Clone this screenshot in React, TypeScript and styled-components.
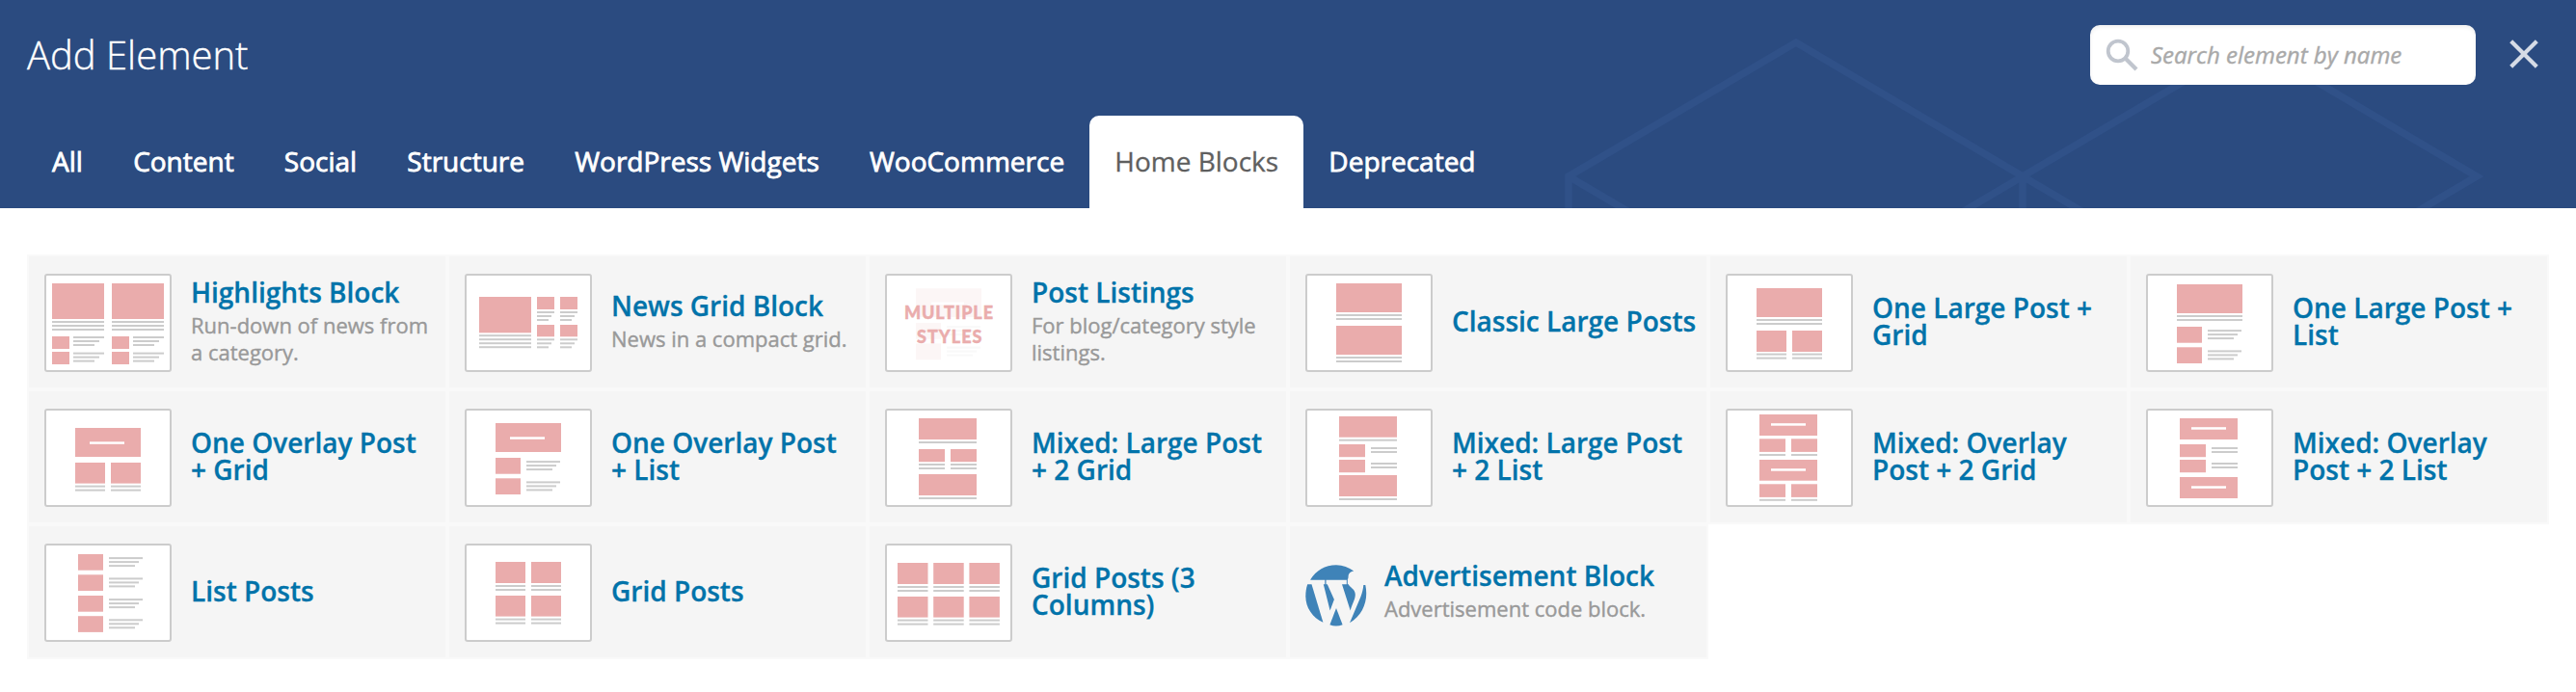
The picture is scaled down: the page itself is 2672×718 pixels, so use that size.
import React from 'react';
import styled, { createGlobalStyle } from 'styled-components';

const GlobalStyle = createGlobalStyle`
  *, *::before, *::after { box-sizing: border-box; }
  body {
    margin: 0;
    background: #fff;
    font-family: 'Open Sans', 'Noto Sans', sans-serif;
  }
`;

const PINK = '#eaacac';
const GREY = '#cccccc';

const Panel = styled.main`
  min-height: 718px;
  background: #fff;
`;

const Header = styled.header`
  position: relative;
  display: flex;
  flex-direction: column;
  justify-content: space-between;
  height: 216px;
  padding: 26px 28px 0;
  background: #2b4b80;
`;

const Pattern = styled.svg`
  position: absolute;
  top: 0;
  right: 0;
  width: 1072px;
  height: 216px;
  fill: none;
  stroke: #305188;
  stroke-width: 7.5px;
`;

const TitleBar = styled.div`
  position: relative;
  display: flex;
  align-items: center;
  height: 62px;
`;

const Title = styled.h1`
  flex: 1;
  margin: 0;
  color: #fff;
  font-size: 40px;
  font-weight: 300;
  line-height: 62px;
  -webkit-text-stroke: 0.4px currentColor;
`;

const SearchBox = styled.label`
  display: flex;
  align-items: center;
  width: 400px;
  height: 62px;
  padding-left: 16px;
  border-radius: 10px;
  background: #fff;
  box-shadow: inset 0 2px 4px rgba(0, 0, 0, 0.07);
`;

const SearchInput = styled.input`
  flex: 1;
  min-width: 0;
  margin-left: 13px;
  padding: 0 0 2px;
  border: 0;
  outline: 0;
  background: transparent;
  font: italic 400 24px 'Open Sans', sans-serif;
  &::placeholder {
    color: #a9a9a9;
    opacity: 1;
    -webkit-text-stroke: 0.4px #a9a9a9;
  }
`;

const CloseButton = styled.button`
  display: flex;
  margin: 0 11px 2px 35px;
  padding: 0;
  border: 0;
  background: none;
`;

const Tabs = styled.nav`
  position: relative;
  display: flex;
`;

const Tab = styled.button<{ $active?: boolean }>`
  height: 96px;
  padding: 0 26.1px 2px;
  border: 0;
  border-radius: 10px 10px 0 0;
  background: ${(p) => (p.$active ? '#fff' : 'transparent')};
  color: ${(p) => (p.$active ? '#5f5f5f' : '#fff')};
  font-family: inherit;
  font-size: 28px;
  font-weight: 400;
  white-space: nowrap;
  -webkit-text-stroke: ${(p) => (p.$active ? '0.3px' : '0.8px')} currentColor;
`;

const Grid = styled.section`
  display: grid;
  grid-template-columns: repeat(6, 436px);
  grid-auto-rows: 140px;
  padding: 48px 28px;
`;

const Card = styled.article`
  display: flex;
  align-items: center;
  padding: 0 10px 0 16px;
  border: 2px solid #f9f9f9;
  background: #f5f5f5;
`;

const Thumb = styled.svg`
  flex: none;
  box-sizing: border-box;
  width: 132px;
  height: 102px;
  margin: 2px 20px 0 0;
  border: 2px solid #ccc;
  border-radius: 3px;
  background: #fff;
`;

const Logo = styled.svg`
  flex: none;
  width: 64px;
  height: 64px;
  margin: 8px 18px 0 0;
  fill: #3f83b8;
`;

const Name = styled.h2`
  margin: 0;
  padding-bottom: 2px;
  color: #0073aa;
  font-size: 28px;
  font-weight: 600;
  line-height: 28px;
  -webkit-text-stroke: 0.3px currentColor;
`;

const Description = styled.p`
  margin: 4px 0 0;
  color: #999;
  font-size: 22px;
  line-height: 28px;
  -webkit-text-stroke: 0.4px currentColor;
`;

const ThumbText = styled.text`
  fill: ${PINK};
  stroke: ${PINK};
  stroke-width: 0.4px;
  font-family: Lato, sans-serif;
  font-size: 18px;
  font-weight: 900;
`;

/* Building pieces of the layout previews, in pixels of the 128x98 drawing area. */
const Box = ({ x, y, w, h }: { x: number; y: number; w: number; h: number }) => (
  <rect x={x} y={y} width={w} height={h} fill={PINK} />
);

const Lines = ({ x, y, w }: { x: number; y: number; w: number[] }) => (
  <>
    {w.map((width, i) => (
      <rect key={i} x={x} y={y + i * 4} width={width} height={2} fill={GREY} />
    ))}
  </>
);

const Overlay = ({ x, y, w, h, line }: { x: number; y: number; w: number; h: number; line: number }) => (
  <>
    <Box x={x} y={y} w={w} h={h} />
    <rect x={45} y={line} width={36} height={2.5} fill="#fff" />
  </>
);

type PostProps = { x: number; y: number; w: number; h: number; gap: number; lines: number[] };

const Post = ({ x, y, w, h, gap, lines }: PostProps) => (
  <>
    <Box x={x} y={y} w={w} h={h} />
    <Lines x={x} y={y + h + gap} w={lines} />
  </>
);

const ListItem = ({ x, y, h = 16.7 }: { x: number; y: number; h?: number }) => (
  <>
    <Box x={x} y={y} w={26} h={h} />
    <Lines x={x + 32} y={y + 3.1} w={[35, 31, 27]} />
  </>
);

const CompactItem = ({ y }: { y: number }) => (
  <>
    <Box x={33} y={y} w={27} h={13.2} />
    <Lines x={66} y={y + 3} w={[27, 27]} />
  </>
);

const previews: Record<string, React.ReactNode> = {
  highlights: [6, 68].map((x) => (
    <g key={x}>
      <Post x={x} y={8} w={54} h={37} gap={2} lines={[54, 54, 54]} />
      <Box x={x} y={63} w={18} h={13} />
      <Lines x={x + 22} y={63} w={[32, 27, 22]} />
      <Box x={x} y={79} w={18} h={13} />
      <Lines x={x + 22} y={79.6} w={[32, 27, 22]} />
    </g>
  )),
  newsGrid: (
    <>
      <Box x={13} y={22} w={54} h={37.3} />
      <Lines x={13} y={61.2} w={[54, 54, 54, 54]} />
      {[73, 97].map((x) => (
        <g key={x}>
          <Post x={x} y={22} w={18} h={13} gap={2} lines={[18, 15, 12]} />
          <Post x={x} y={51} w={18} h={12.3} gap={2} lines={[18, 15, 12]} />
        </g>
      ))}
    </>
  ),
  listings: (
    <>
      <g opacity={0.1}>
        <Box x={30} y={13.3} w={68} h={29.7} />
        <rect x={46} y={27.5} width={34} height={2.5} fill="#fff" />
        <ListItem x={30} y={49} />
        <ListItem x={30} y={70.5} />
      </g>
      <ThumbText x={18} y={44.8} textLength={92} lengthAdjust="spacing">MULTIPLE</ThumbText>
      <ThumbText x={31} y={69.5} textLength={67.5} lengthAdjust="spacing">STYLES</ThumbText>
    </>
  ),
  classic: (
    <>
      <Post x={30} y={8} w={68} h={30} gap={2} lines={[68, 68]} />
      <Post x={30} y={52} w={68} h={30} gap={2} lines={[68, 68]} />
    </>
  ),
  largeGrid: (
    <>
      <Post x={30} y={13} w={68} h={30} gap={2} lines={[68, 68]} />
      <Post x={30} y={57} w={31} h={22} gap={1.6} lines={[31, 31]} />
      <Post x={67} y={57} w={31} h={22} gap={1.6} lines={[31, 31]} />
    </>
  ),
  largeList: (
    <>
      <Post x={30} y={9} w={68} h={30} gap={2} lines={[68, 68]} />
      <ListItem x={30} y={53} />
      <ListItem x={30} y={74.3} />
    </>
  ),
  overlayGrid: (
    <>
      <Overlay x={30} y={18} w={68} h={30} line={32.3} />
      <Post x={30} y={54} w={31} h={21.6} gap={2} lines={[31, 31]} />
      <Post x={67} y={54} w={31} h={21.6} gap={2} lines={[31, 31]} />
    </>
  ),
  overlayList: (
    <>
      <Overlay x={30} y={13} w={68} h={30} line={27.3} />
      <ListItem x={30} y={49} />
      <ListItem x={30} y={70.3} />
    </>
  ),
  mixedLargeGrid: (
    <>
      <Post x={33} y={8} w={60} h={22} gap={2} lines={[60]} />
      <Post x={33} y={40} w={27} h={13.2} gap={1.8} lines={[27, 27]} />
      <Post x={66} y={40} w={27} h={13.2} gap={1.8} lines={[27, 27]} />
      <Post x={33} y={66} w={60} h={22} gap={2} lines={[60]} />
    </>
  ),
  mixedLargeList: (
    <>
      <Post x={33} y={6} w={60} h={21.7} gap={2} lines={[60]} />
      <CompactItem y={35} />
      <CompactItem y={51} />
      <Post x={33} y={67} w={60} h={22} gap={2} lines={[60]} />
    </>
  ),
  mixedOverlayGrid: (
    <>
      <Overlay x={33} y={4} w={60} h={22} line={13.2} />
      <Post x={33} y={29.3} w={27} h={13.6} gap={2.1} lines={[27]} />
      <Post x={66} y={29.3} w={27} h={13.6} gap={2.1} lines={[27]} />
      <Overlay x={33} y={51} w={60} h={21.7} line={60.2} />
      <Post x={33} y={76.3} w={27} h={13.6} gap={1.9} lines={[27]} />
      <Post x={66} y={76.3} w={27} h={13.6} gap={1.9} lines={[27]} />
    </>
  ),
  mixedOverlayList: (
    <>
      <Overlay x={33} y={8} w={60} h={22} line={17.2} />
      <CompactItem y={35} />
      <CompactItem y={51} />
      <Overlay x={33} y={69} w={60} h={22} line={78.3} />
    </>
  ),
  list: [9, 30.3, 52, 73.2].map((y) => <ListItem key={y} x={33} y={y} />),
  grid: [30, 67].map((x) => (
    <g key={x}>
      <Post x={x} y={17} w={31} h={22} gap={2} lines={[31, 31]} />
      <Post x={x} y={52} w={31} h={21.6} gap={2} lines={[31, 31]} />
    </g>
  )),
  gridThree: [11, 48.2, 85.4].map((x) => (
    <g key={x}>
      <Post x={x} y={18} w={31.5} h={22} gap={2} lines={[31.5, 31.5]} />
      <Post x={x} y={53} w={31.5} h={21.6} gap={2} lines={[31.5, 31.5]} />
    </g>
  )),
};

const WordPressLogo = () => (
  <Logo viewBox="0 0 64 64">
    <path d="M5.3 15.3C11 6 20.500 0.300 32 0.300C39 0.300 45 2.600 50.300 6.600C46.500 7 44.600 9.500 44.600 12.300C44.600 13.500 44.300 14.500 43.800 15.500V20.200H44.800C46 23.500 51.800 25 51.800 31C51.800 36 48.500 40.500 46.700 47.500L38 20.200H42.800V15.800H21.500V20.200H22.800L29.900 36L25.600 47.500L18.800 20.200H20.300V15.800H5.300Z" />
    <path d="M2.200 20.200H6.500L18.400 59.800C7.500 55 0.300 44.500 0.300 32.500C0.300 28 0.900 24 2.200 20.200Z" />
    <path d="M62.300 21C65.500 36 60.500 51.500 46 60.200L57.500 33C59 29 60 25 60.300 21Z" />
    <path d="M32 45L38.600 62.300C34 64 29.500 64 25.400 62.300Z" />
  </Logo>
);

const tabs = ['All', 'Content', 'Social', 'Structure', 'WordPress Widgets', 'WooCommerce', 'Home Blocks', 'Deprecated'];

const elements: { name: string; preview?: string; description?: string }[] = [
  { name: 'Highlights Block', preview: 'highlights', description: 'Run-down of news from a category.' },
  { name: 'News Grid Block', preview: 'newsGrid', description: 'News in a compact grid.' },
  { name: 'Post Listings', preview: 'listings', description: 'For blog/category style listings.' },
  { name: 'Classic Large Posts', preview: 'classic' },
  { name: 'One Large Post + Grid', preview: 'largeGrid' },
  { name: 'One Large Post + List', preview: 'largeList' },
  { name: 'One Overlay Post + Grid', preview: 'overlayGrid' },
  { name: 'One Overlay Post + List', preview: 'overlayList' },
  { name: 'Mixed: Large Post + 2 Grid', preview: 'mixedLargeGrid' },
  { name: 'Mixed: Large Post + 2 List', preview: 'mixedLargeList' },
  { name: 'Mixed: Overlay Post + 2 Grid', preview: 'mixedOverlayGrid' },
  { name: 'Mixed: Overlay Post + 2 List', preview: 'mixedOverlayList' },
  { name: 'List Posts', preview: 'list' },
  { name: 'Grid Posts', preview: 'grid' },
  { name: 'Grid Posts (3 Columns)', preview: 'gridThree' },
  { name: 'Advertisement Block', description: 'Advertisement code block.' },
];

export default function App() {
  return (
    <Panel>
      <GlobalStyle />
      <Header>
        <Pattern viewBox="1600 0 1072 216">
          <path d="M1627 240V183L1863 44L2098 183L2334 322M1627 183L1863 322L2098 183L2334 44L2569 183L2334 322M2098 183V240" />
        </Pattern>
        <TitleBar>
          <Title>Add Element</Title>
          <SearchBox>
            <svg width="34" height="34" viewBox="0 0 34 34" fill="none" stroke="#c0c5ce">
              <circle cx="13" cy="13" r="10.3" strokeWidth="3.8" />
              <path d="M20.500 20.500L32 32" strokeWidth="4.2" />
            </svg>
            <SearchInput placeholder="Search element by name" />
          </SearchBox>
          <CloseButton aria-label="Close">
            <svg width="30" height="30" viewBox="0 0 30 30" stroke="#d5dbe6" strokeWidth="4.2">
              <path d="M1.700 1.700L28.300 28.300M28.300 1.700L1.700 28.300" />
            </svg>
          </CloseButton>
        </TitleBar>
        <Tabs>
          {tabs.map((tab) => (
            <Tab key={tab} $active={tab === 'Home Blocks'}>{tab}</Tab>
          ))}
        </Tabs>
      </Header>
      <Grid>
        {elements.map(({ name, preview, description }) => (
          <Card key={name}>
            {preview ? <Thumb viewBox="0 0 128 98">{previews[preview]}</Thumb> : <WordPressLogo />}
            <div>
              <Name>{name}</Name>
              {description && <Description>{description}</Description>}
            </div>
          </Card>
        ))}
      </Grid>
    </Panel>
  );
}
